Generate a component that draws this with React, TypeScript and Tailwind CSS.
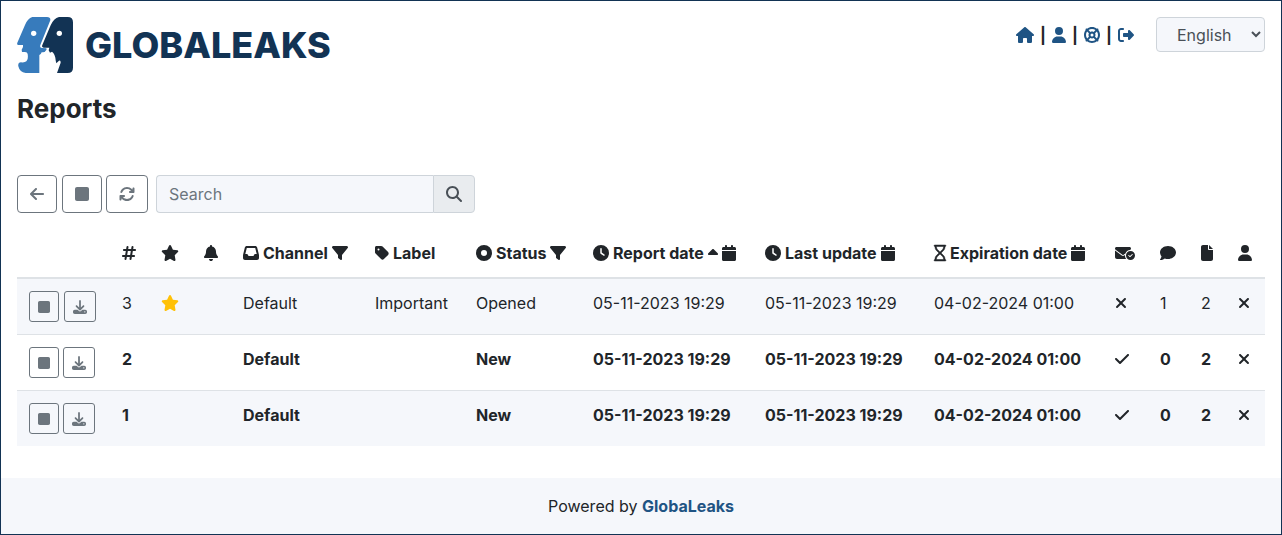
import type { ComponentType, ReactNode } from "react";
import {
  FaArrowLeft,
  FaArrowsRotate,
  FaBell,
  FaCalendar,
  FaCaretUp,
  FaCheck,
  FaCircleDot,
  FaClock,
  FaComment,
  FaDownload,
  FaEnvelopeCircleCheck,
  FaFile,
  FaFilter,
  FaHashtag,
  FaHouse,
  FaInbox,
  FaLifeRing,
  FaMagnifyingGlass,
  FaRegHourglass,
  FaRightFromBracket,
  FaSquare,
  FaStar,
  FaTag,
  FaUser,
  FaXmark,
} from "react-icons/fa6";

type IconType = ComponentType<{ className?: string }>;

function Icon({ as: Glyph, size = "h-4 w-4" }: { as: IconType; size?: string }) {
  return <Glyph className={`inline-block shrink-0 ${size}`} />;
}

function LogoMark() {
  return (
    <svg viewBox="0 0 168 168" className="h-14 w-14" aria-hidden="true">
      <path
        fill="#377bbc"
        d="M46 0H90Q101 0 100 10L70 84Q67 92 75 93L88 94Q90 98 86 101Q84 106 78 106H74Q72 112 67 114V168H26Q8 166 4 148Q2 137 12 136Q27 137 30 130Q34 124 32 111Q31 105 24 105H15L14 98L18 90V84H4Q-1 83 1 77L24 24Q32 4 46 0Z"
      />
      <path
        fill="#123354"
        d="M126 0H152Q168 0 168 16V152Q168 168 152 168H120L131 137Q131 128 126 131L118 139Q116 132 115 122Q112 108 105 104L99 107L95 100L97 92H80Q73 91 76 84L101 25Q110 4 126 0Z"
      />
      <circle cx="50" cy="49" r="8" fill="#fff" />
      <circle cx="127" cy="49" r="8" fill="#fff" />
    </svg>
  );
}

function NavLink({ label, children }: { label: string; children: ReactNode }) {
  return (
    <a href="#" aria-label={label} className="flex text-[#1f5484]">
      {children}
    </a>
  );
}

function Divider() {
  return <span className="flex h-6 w-1 items-center justify-center font-bold">|</span>;
}

function ToolButton({ label, children }: { label: string; children: ReactNode }) {
  return (
    <button
      type="button"
      aria-label={label}
      className="inline-flex h-[38px] items-center rounded border border-[#6c757d] bg-white px-3 align-top text-[#6c757d]"
    >
      {children}
    </button>
  );
}

function RowButton({ label, children }: { label: string; children: ReactNode }) {
  return (
    <button
      type="button"
      aria-label={label}
      className="inline-flex h-[31px] items-center rounded-[3px] border border-[#6c757d] px-2 align-top text-[#6c757d]"
    >
      {children}
    </button>
  );
}

function Head({ label, children }: { label?: string; children?: ReactNode }) {
  return (
    <th scope="col" aria-label={label} className="border-b-2 border-[#dee2e6] p-3 text-left font-bold whitespace-nowrap">
      <span className="flex h-6 items-center gap-1">{children}</span>
    </th>
  );
}

function Cell({ children }: { children?: ReactNode }) {
  return <td className="p-3 align-top whitespace-nowrap">{children}</td>;
}

function Mark({ on }: { on: boolean }) {
  return (
    <span className="flex h-6 items-center">
      {on ? <Icon as={FaCheck} size="h-4 w-[14px]" /> : <Icon as={FaXmark} size="h-4 w-3" />}
    </span>
  );
}

interface Report {
  id: number;
  starred: boolean;
  channel: string;
  label: string;
  status: string;
  created: string;
  updated: string;
  expires: string;
  notified: boolean;
  comments: number;
  files: number;
  unread: boolean;
}

const reports: Report[] = [
  { id: 3, starred: true, channel: "Default", label: "Important", status: "Opened", created: "05-11-2023 19:29", updated: "05-11-2023 19:29", expires: "04-02-2024 01:00", notified: false, comments: 1, files: 2, unread: false },
  { id: 2, starred: false, channel: "Default", label: "", status: "New", created: "05-11-2023 19:29", updated: "05-11-2023 19:29", expires: "04-02-2024 01:00", notified: true, comments: 0, files: 2, unread: true },
  { id: 1, starred: false, channel: "Default", label: "", status: "New", created: "05-11-2023 19:29", updated: "05-11-2023 19:29", expires: "04-02-2024 01:00", notified: true, comments: 0, files: 2, unread: true },
];

function ReportsTable() {
  return (
    <table className="w-full table-fixed border-collapse">
      <colgroup>
        <col className="w-[93px]" />
        <col className="w-[39px]" />
        <col className="w-[43px]" />
        <col className="w-[39px]" />
        <col className="w-[132px]" />
        <col className="w-[101px]" />
        <col className="w-[117px]" />
        <col className="w-[172px]" />
        <col className="w-[169px]" />
        <col className="w-[181px]" />
        <col className="w-[45px]" />
        <col className="w-[41px]" />
        <col className="w-[37px]" />
        <col className="w-[39px]" />
      </colgroup>
      <thead>
        <tr>
          <Head label="Actions" />
          <Head label="Number"><Icon as={FaHashtag} size="h-4 w-[14px]" /></Head>
          <Head label="Important"><Icon as={FaStar} size="h-4 w-[18px]" /></Head>
          <Head label="Reminder"><Icon as={FaBell} size="h-4 w-[14px]" /></Head>
          <Head><Icon as={FaInbox} />Channel<Icon as={FaFilter} /></Head>
          <Head><Icon as={FaTag} size="h-4 w-[14px]" />Label</Head>
          <Head><Icon as={FaCircleDot} />Status<Icon as={FaFilter} /></Head>
          <Head>
            <Icon as={FaClock} />Report date
            <span className="flex items-center gap-1">
              <Icon as={FaCaretUp} size="h-4 w-[10px]" />
              <Icon as={FaCalendar} size="h-4 w-[14px]" />
            </span>
          </Head>
          <Head><Icon as={FaClock} />Last update<Icon as={FaCalendar} size="h-4 w-[14px]" /></Head>
          <Head>
            <FaRegHourglass className="h-4 w-3 shrink-0 overflow-visible stroke-current [stroke-width:16]" />
            Expiration date
            <Icon as={FaCalendar} size="h-4 w-[14px]" />
          </Head>
          <Head label="Notified"><Icon as={FaEnvelopeCircleCheck} size="h-4 w-5" /></Head>
          <Head label="Comments"><Icon as={FaComment} /></Head>
          <Head label="Files"><Icon as={FaFile} size="h-4 w-3" /></Head>
          <Head label="Identity"><Icon as={FaUser} size="h-4 w-[14px]" /></Head>
        </tr>
      </thead>
      <tbody>
        {reports.map((r) => (
          <tr
            key={r.id}
            className={`border-b border-[#dee2e6] last:border-b-0 odd:bg-[#f5f7fb] ${r.unread ? "font-bold" : ""}`}
          >
            <Cell>
              <RowButton label="Select report"><Icon as={FaSquare} size="h-[14px] w-3" /></RowButton>{" "}
              <RowButton label="Download report"><Icon as={FaDownload} size="h-[14px] w-[14px]" /></RowButton>
            </Cell>
            <Cell>{r.id}</Cell>
            <Cell>
              {r.starred && (
                <span className="flex h-6 items-center text-[#ffc107]"><Icon as={FaStar} size="h-4 w-[18px]" /></span>
              )}
            </Cell>
            <Cell />
            <Cell>{r.channel}</Cell>
            <Cell>{r.label}</Cell>
            <Cell>{r.status}</Cell>
            <Cell>{r.created}</Cell>
            <Cell>{r.updated}</Cell>
            <Cell>{r.expires}</Cell>
            <Cell><Mark on={r.notified} /></Cell>
            <Cell>{r.comments}</Cell>
            <Cell>{r.files}</Cell>
            <Cell><Mark on={false} /></Cell>
          </tr>
        ))}
      </tbody>
    </table>
  );
}

export default function App() {
  return (
    <div className="flex min-h-screen flex-col border border-[#123354] bg-white font-['Inter',sans-serif] text-base text-[#212529]">
      <header className="flex items-start justify-between px-4 pt-4">
        <a href="#" className="flex items-center gap-3 text-4xl leading-none font-extrabold text-[#123354]">
          <LogoMark />
          GLOBALEAKS
        </a>
        <div className="flex items-center gap-[22px]">
          <nav className="flex items-center gap-[7px]">
            <NavLink label="Home"><Icon as={FaHouse} size="h-4 w-[18px]" /></NavLink>
            <Divider />
            <NavLink label="Account"><Icon as={FaUser} size="h-4 w-[14px]" /></NavLink>
            <Divider />
            <NavLink label="Help"><Icon as={FaLifeRing} /></NavLink>
            <Divider />
            <NavLink label="Log out"><Icon as={FaRightFromBracket} /></NavLink>
          </nav>
          <select
            aria-label="Language"
            className="h-[35px] w-[109px] rounded border border-[#ced4da] bg-[#f5f7fb] pl-4 text-[#495057]"
          >
            <option>English</option>
          </select>
        </div>
      </header>
      <main className="grow px-4 pt-4 pb-8">
        <h1 className="text-[26px] leading-10 font-bold">Reports</h1>
        <div className="mt-[46px] flex gap-2">
          <div>
            <ToolButton label="Back"><Icon as={FaArrowLeft} size="h-4 w-[14px]" /></ToolButton>{" "}
            <ToolButton label="Select all"><Icon as={FaSquare} size="h-4 w-[14px]" /></ToolButton>{" "}
            <ToolButton label="Refresh"><Icon as={FaArrowsRotate} /></ToolButton>
          </div>
          <form className="flex h-[38px] w-[319px]" onSubmit={(e) => e.preventDefault()}>
            <input
              type="text"
              aria-label="Search"
              placeholder="Search"
              className="min-w-0 grow rounded-l border border-r-0 border-[#ced4da] bg-[#f5f7fb] px-3 placeholder:text-[#6c757d]"
            />
            <button
              type="submit"
              aria-label="Run search"
              className="flex w-[42px] items-center justify-center rounded-r border border-[#ced4da] bg-[#e9ecef] text-[#495057]"
            >
              <Icon as={FaMagnifyingGlass} />
            </button>
          </form>
        </div>
        <div className="mt-4">
          <ReportsTable />
        </div>
      </main>
      <footer className="bg-[#f5f7fb] p-4 text-center">
        Powered by{" "}
        <a href="#" className="font-bold text-[#1f5484]">GlobaLeaks</a>
      </footer>
    </div>
  );
}
